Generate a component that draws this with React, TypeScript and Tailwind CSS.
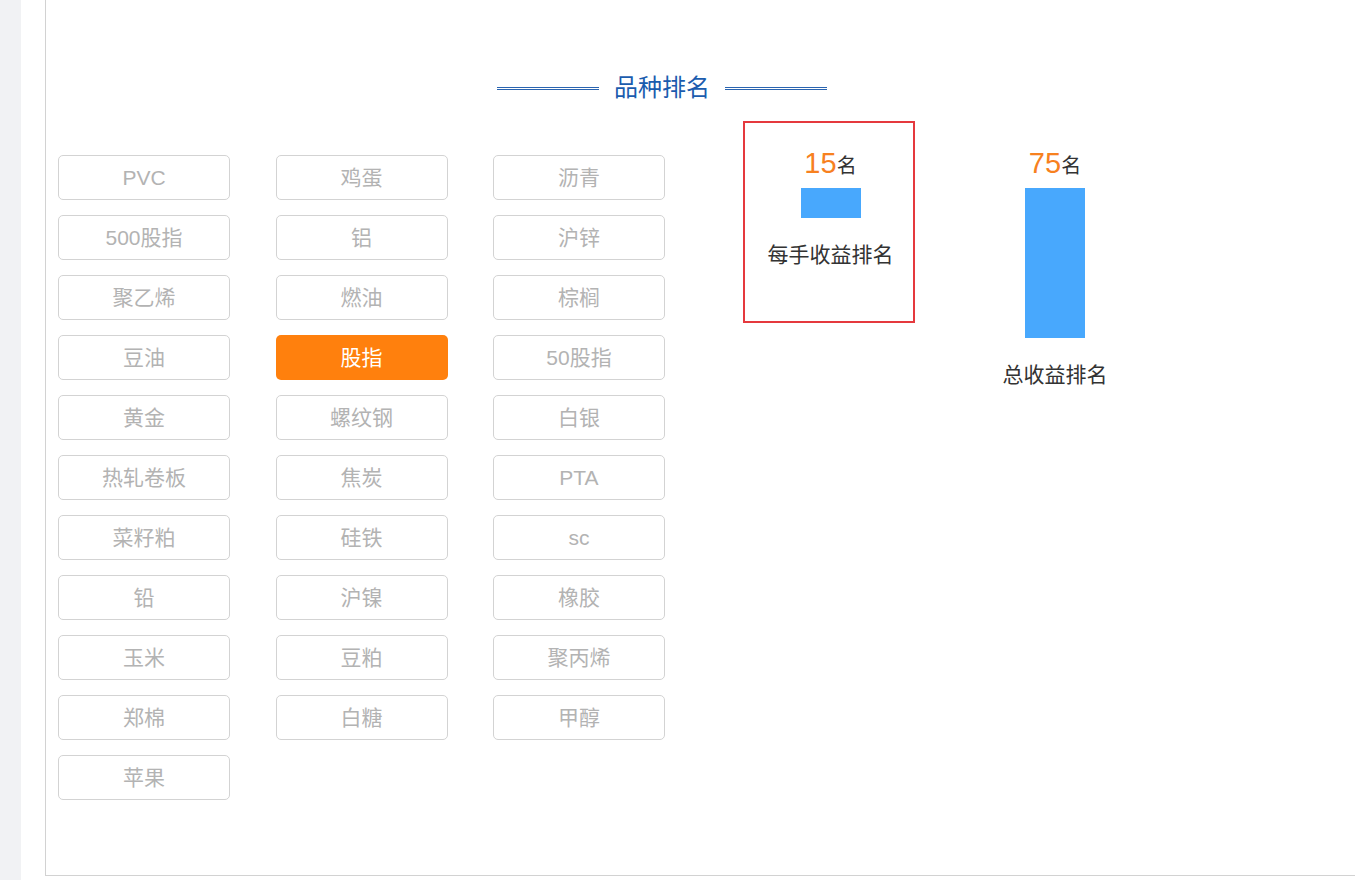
const items = [
  "PVC", "鸡蛋", "沥青",
  "500股指", "铝", "沪锌",
  "聚乙烯", "燃油", "棕榈",
  "豆油", "股指", "50股指",
  "黄金", "螺纹钢", "白银",
  "热轧卷板", "焦炭", "PTA",
  "菜籽粕", "硅铁", "sc",
  "铅", "沪镍", "橡胶",
  "玉米", "豆粕", "聚丙烯",
  "郑棉", "白糖", "甲醇",
  "苹果",
];

const active = "股指";

function RankBar({ rank, barH, label, boxed }: { rank: number; barH: number; label: string; boxed?: boolean }) {
  return (
    <div
      className={
        boxed
          ? "flex h-[202px] w-[172px] flex-col items-center border-2 border-[#e5393e] pl-[3px] pt-[22px]"
          : "flex w-[172px] flex-col items-center pt-[24px]"
      }
    >
      <div className="flex h-[36px] items-baseline leading-[36px]">
        <span className="text-[29px] text-[#f7811f]">{rank}</span>
        <span className="text-[20px] text-[#333]">名</span>
      </div>
      <div className="mt-[7px] w-[60px] bg-[#48a8fd]" style={{ height: barH }} />
      <div className="mt-[23px] text-[21px] leading-[28px] text-[#333]">{label}</div>
    </div>
  );
}

export default function App() {
  return (
    <div
      className="flex h-[880px] w-[1355px] overflow-hidden bg-white"
      style={{ fontFamily: '"Liberation Sans", "Noto Sans CJK SC", sans-serif' }}
    >
      <div className="w-[21px] shrink-0 bg-[#f1f2f4]" />
      <div className="w-[24px] shrink-0 bg-white" />
      <div className="h-[876px] flex-1 border-b border-l border-[#d2d2d2]">
        {/* title */}
        <div className="ml-[451px] mt-[70px] flex h-[36px] items-center gap-[15px]">
          <div className="h-[3px] w-[102px] border-t-[3px] border-double border-[#2a64b0]" />
          <div className="text-[24px] leading-[36px] text-[#1b5cae]">品种排名</div>
          <div className="h-[3px] w-[102px] border-t-[3px] border-double border-[#2a64b0]" />
        </div>

        <div className="mt-[15px] flex items-start">
          {/* variety buttons */}
          <div className="ml-[12px] grid grid-cols-[172px_172px_172px] gap-x-[45.5px] gap-y-[15px] pt-[34px]">
            {items.map((name) => (
              <div
                key={name}
                className={
                  name === active
                    ? "flex h-[45px] items-center justify-center rounded-[5px] bg-[#ff800d] text-[21px] text-white"
                    : "flex h-[45px] items-center justify-center rounded-[5px] border border-[#d3d3d3] text-[21px] text-[#b3b3b3]"
                }
              >
                {name}
              </div>
            ))}
          </div>

          {/* ranks */}
          <div className="ml-[78px] flex items-start gap-[54px]">
            <RankBar rank={15} barH={30} label="每手收益排名" boxed />
            <RankBar rank={75} barH={150} label="总收益排名" />
          </div>
        </div>
      </div>
    </div>
  );
}
